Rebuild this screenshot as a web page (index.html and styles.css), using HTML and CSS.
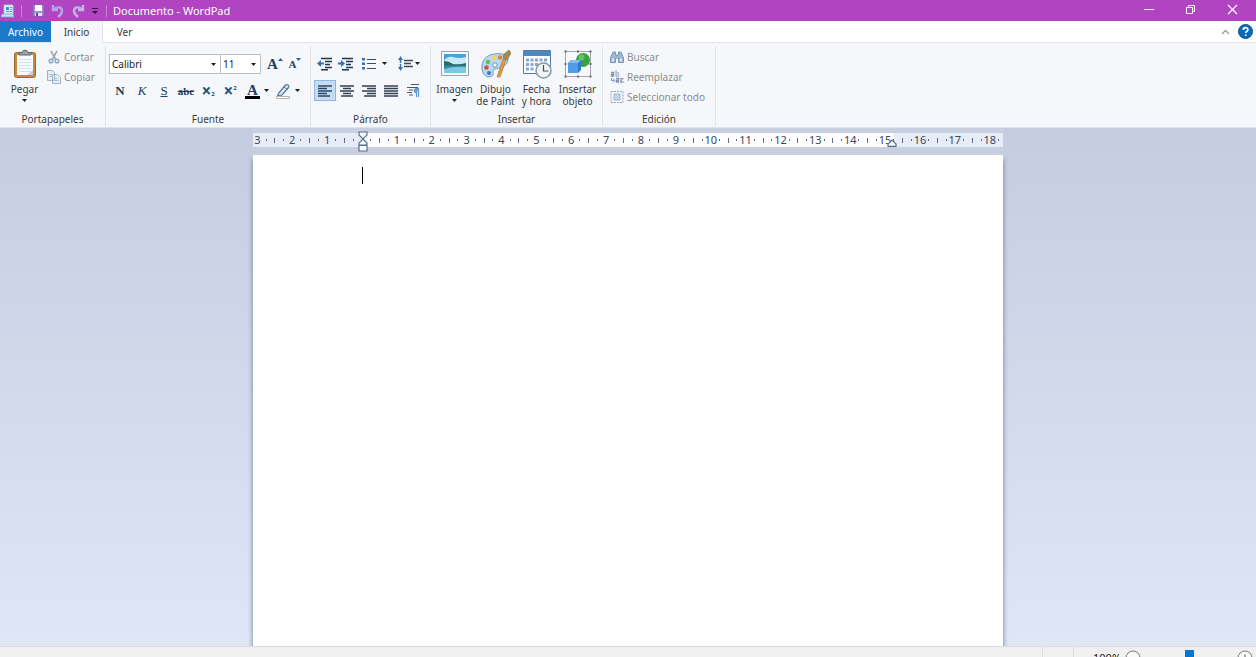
FILE: index.html
```html
<!DOCTYPE html>
<html lang="es">
<head>
<meta charset="utf-8">
<title>Documento - WordPad</title>
<link rel="stylesheet" href="styles.css">
</head>
<body>
<header class="titlebar">
  <svg class="app-icon" width="14" height="14" viewBox="0 0 14 14"><path d="M3 1h9v9H3z" fill="#e8f4ff" stroke="#9cc4e4"/><path d="M5 3h3v3H5z" fill="#3f8fc9"/><path d="M9 3.5h2M9 5.5h2M5 7.5h6" stroke="#5a93c0"/><path d="M1 10h11l1 3H0z" fill="#c4e2f5" stroke="#7fa9d0" stroke-width=".7"/></svg>
  <span class="bar"></span>
  <button class="quick" aria-label="Guardar"><svg width="13" height="13" viewBox="0 0 13 13"><path d="M1 1h11v11H1z" fill="#a48bd4" stroke="#7d62b4"/><path d="M3 1h7v6H3z" fill="#fff"/><path d="M3 9h7v3H3z" fill="#e6e0f4"/><path d="M4 9h2v3H4z" fill="#584a86"/></svg></button>
  <button class="quick" aria-label="Deshacer"><svg width="14" height="14" viewBox="0 0 14 14"><path d="M2 1v5h5M2.500 5.500C6 2 11 3 11 7c0 3-2 4.500-4 6" fill="none" stroke="#b3a6e8" stroke-width="2.400"/></svg></button>
  <button class="quick" aria-label="Rehacer"><svg width="14" height="14" viewBox="0 0 14 14"><path d="M12 1v5H7M11.500 5.500C8 2 3 3 3 7c0 3 2 4.500 4 6" fill="none" stroke="#c4b5e6" stroke-width="2.400"/></svg></button>
  <button class="quick more" aria-label="Personalizar"><svg width="8" height="8" viewBox="0 0 8 8"><path d="M1 1.500h6" stroke="#2b1333"/><path d="M1 4h6L4 7z" fill="#2b1333"/></svg></button>
  <span class="bar"></span>
  <h1 class="title">Documento - WordPad</h1>
  <button class="win" aria-label="Minimizar"><svg width="11" height="11" viewBox="0 0 11 11"><path d="M1 5.500h10" stroke="#fff"/></svg></button>
  <button class="win" aria-label="Restaurar"><svg width="11" height="11" viewBox="0 0 11 11"><path d="M1.500 3.500h6v6h-6zM3.500 3V1.500h6v6H8" fill="none" stroke="#fff"/></svg></button>
  <button class="win" aria-label="Cerrar"><svg width="11" height="11" viewBox="0 0 11 11"><path d="M1 1l9 9M10 1l-9 9" stroke="#fff" stroke-width="1.200"/></svg></button>
</header>

<nav class="tabs">
  <button class="tab file">Archivo</button>
  <button class="tab active">Inicio</button>
  <button class="tab">Ver</button>
  <span class="grow"></span>
  <button class="plain" aria-label="Minimizar la cinta"><svg width="9" height="6" viewBox="0 0 9 6"><path d="M1 5l3.500-3.500L8 5" fill="none" stroke="#9a9a9a" stroke-width="1.300"/></svg></button>
  <button class="plain" aria-label="Ayuda"><svg width="15" height="15" viewBox="0 0 15 15"><circle cx="7.500" cy="7.500" r="7" fill="#0c6bb8" stroke="#0a5292"/><path d="M5.300 6c0-3 4.600-3 4.600-.3 0 1.600-2.200 1.600-2.200 3.300M7.700 10.500v1.500" fill="none" stroke="#fff" stroke-width="1.700"/></svg></button>
</nav>

<main class="ribbon">
  <section class="group clipboard">
    <div class="content row">
      <button class="big paste">
        <svg width="24" height="30" viewBox="0 0 24 30"><rect x="1.500" y="3.500" width="21" height="25" rx="2" fill="#c98a3c" stroke="#9c6a2c"/><path d="M4 6h16v20H4z" fill="#f7fbff"/><path d="M6 10.500h12M6 13.500h12M6 16.500h12M6 19.500h12M6 22.500h12" stroke="#cfe0ee"/><path d="M14 26l6-5v5z" fill="#c3d2de"/><path d="M6 6V3.500h3c0-3 6-3 6 0h3V6z" fill="#9aa2a8" stroke="#5c646c"/></svg>
        <span>Pegar</span>
        <svg class="arrow" width="5" height="3" viewBox="0 0 5 3"><path d="M0 0h5L2.500 3z"/></svg>
      </button>
      <div class="stack">
        <button class="small" disabled><svg width="14" height="14" viewBox="0 0 14 14"><path d="M4 1l5 9M10 1L5 10" stroke="#9fabb9" stroke-width="1.700"/><circle cx="4" cy="11" r="1.800" fill="none" stroke="#8fa6c4" stroke-width="1.500"/><circle cx="10" cy="11" r="1.800" fill="none" stroke="#8fa6c4" stroke-width="1.500"/></svg><span>Cortar</span></button>
        <button class="small" disabled><svg width="14" height="14" viewBox="0 0 14 14"><path d="M.5.500h5l2 2v8h-7zM5.500 4.500h5l3 3v6h-8z" fill="#e6eef6" stroke="#9fb2c6"/><path d="M2 4.500h3M2 6.500h3M7 8.500h4M7 10.500h5" stroke="#a9c2da"/></svg><span>Copiar</span></button>
      </div>
    </div>
    <h2 class="caption">Portapapeles</h2>
  </section>

  <section class="group font">
    <div class="content lines">
      <div class="row">
        <div class="combo family"><select aria-label="Familia de fuente"><option>Calibri</option></select><svg class="arrow" width="5" height="3" viewBox="0 0 5 3"><path d="M0 0h5L2.500 3z"/></svg></div>
        <div class="combo size"><select aria-label="Tamaño de fuente"><option>11</option></select><svg class="arrow" width="5" height="3" viewBox="0 0 5 3"><path d="M0 0h5L2.500 3z"/></svg></div>
        <button class="tool grow-font" aria-label="Agrandar fuente"><span class="letter">A</span><svg width="5" height="12" viewBox="0 0 5 12"><path d="M0 3h5L2.500 0z" fill="#2d5f97"/></svg></button>
        <button class="tool shrink-font" aria-label="Reducir fuente"><span class="letter">A</span><svg width="5" height="12" viewBox="0 0 5 12"><path d="M0 0h5L2.500 3z" fill="#2d5f97"/></svg></button>
      </div>
      <div class="row">
        <button class="tool letter"><b>N</b></button>
        <button class="tool letter"><i>K</i></button>
        <button class="tool letter"><u>S</u></button>
        <button class="tool letter strike"><s>abc</s></button>
        <button class="tool script" aria-label="Subíndice">×<sub>2</sub></button>
        <button class="tool script" aria-label="Superíndice">×<sup>2</sup></button>
        <button class="tool split" aria-label="Color del texto"><span class="letter colored">A</span><svg class="arrow" width="5" height="3" viewBox="0 0 5 3"><path d="M0 0h5L2.500 3z"/></svg></button>
        <button class="tool split highlight" aria-label="Color de resaltado"><svg width="16" height="16" viewBox="0 0 16 16"><path d="M3.500 10.500L10 2.500c2-2 5 0 3.500 2L7 12l-4.500 1z" fill="#dce8f4" stroke="#56789b" stroke-width="1.200"/><path d="M9 4l3.500 2.500" stroke="#56789b"/><path d="M1.500 13.500h13v2h-13z" fill="#fff" stroke="#b4b7a8"/></svg><svg class="arrow" width="5" height="3" viewBox="0 0 5 3"><path d="M0 0h5L2.500 3z"/></svg></button>
      </div>
    </div>
    <h2 class="caption">Fuente</h2>
  </section>

  <section class="group paragraph">
    <div class="content lines">
      <div class="row">
        <button class="tool indent" aria-label="Reducir sangría"><svg width="16" height="14" viewBox="0 0 16 14"><path d="M4 1.500h11M8 4.500h7M8 7.500h5M8 10.500h7M4 12.800h7" stroke="#1f3850" stroke-width="1.500"/><path d="M0 6.500l4-3.500v2.500h3v2H4V10z" fill="#2f74b5"/></svg></button>
        <button class="tool indent" aria-label="Aumentar sangría"><svg width="16" height="14" viewBox="0 0 16 14"><path d="M4 1.500h11M8 4.500h7M8 7.500h5M8 10.500h7M4 12.800h7" stroke="#1f3850" stroke-width="1.500"/><path d="M7 6.500L3 3v2.500H0v2h3V10z" fill="#2f74b5"/></svg></button>
        <button class="tool split list" aria-label="Iniciar una lista"><svg width="14" height="13" viewBox="0 0 14 13"><path d="M0 1h3v2.500H0zM0 5.500h3V8H0zM0 10h3v2.500H0z" fill="#2f74b5"/><path d="M5 2.500h9M5 6.500h9M5 11.500h9" stroke="#3d4d5c"/></svg><svg class="arrow" width="5" height="3" viewBox="0 0 5 3"><path d="M0 0h5L2.500 3z"/></svg></button>
        <button class="tool split spacing" aria-label="Espaciado de línea"><svg width="15" height="15" viewBox="0 0 15 15"><path d="M2.500 3v9" stroke="#2f74b5" stroke-width="1.500" stroke-dasharray="4 1"/><path d="M0 4l2.500-4L5 4zM0 11l2.500 4L5 11z" fill="#2f74b5"/><path d="M6 4.500h9M6 7.500h7M6 10.500h9" stroke="#3d4d5c" stroke-width="1.300"/></svg><svg class="arrow" width="5" height="3" viewBox="0 0 5 3"><path d="M0 0h5L2.500 3z"/></svg></button>
      </div>
      <div class="row">
        <button class="tool pressed" aria-label="Alinear a la izquierda"><svg width="14" height="12" viewBox="0 0 14 12"><path d="M0 1h14M0 3.500h9M0 6h14M0 8.500h9M0 11h12" stroke="#2b4566" stroke-width="1.500"/></svg></button>
        <button class="tool" aria-label="Centrar"><svg width="14" height="12" viewBox="0 0 14 12"><path d="M0 1h14M3 3.500h8M0 6h14M3 8.500h8M1 11h12" stroke="#333f4d" stroke-width="1.500"/></svg></button>
        <button class="tool" aria-label="Alinear a la derecha"><svg width="14" height="12" viewBox="0 0 14 12"><path d="M0 1h14M5 3.500h9M0 6h14M5 8.500h9M2 11h12" stroke="#333f4d" stroke-width="1.500"/></svg></button>
        <button class="tool" aria-label="Justificar"><svg width="14" height="12" viewBox="0 0 14 12"><path d="M0 1h14M0 3.500h14M0 6h14M0 8.500h14M0 11h14" stroke="#333f4d" stroke-width="1.500"/></svg></button>
        <button class="tool" aria-label="Párrafo"><svg width="13" height="13" viewBox="0 0 13 13"><path d="M4 .5h8M0 3.500h11M2 6h4M0 8.500h5M2 11h4" stroke="#4c5967"/><path d="M12 4.500H9.500c-3 0-3 4 0 4M9.500 5v8M11.500 5v8" fill="#79aedb" stroke="#5e97cb" stroke-width="1.200"/></svg></button>
      </div>
    </div>
    <h2 class="caption">Párrafo</h2>
  </section>

  <section class="group insert">
    <div class="content row">
      <button class="big">
        <svg width="28" height="30" viewBox="0 0 28 30"><path d="M.5 2.500h27v24H.5z" fill="#f6fbfd" stroke="#8fa6ae"/><path d="M3 5h22v19H3z" fill="#4f9fe0"/><path d="M3 12q3-5 9-4 6 2 13 0v8H3z" fill="#c8e9f7"/><path d="M3 12q5 0 9 3 6 1 13-1v3H3z" fill="#2f6b5c"/><path d="M3 16.500h22V20H3z" fill="#2f86b4"/><path d="M3 20q10-3 22-2v6H3z" fill="#7cc8dc"/></svg>
        <span>Imagen</span>
        <svg class="arrow" width="5" height="3" viewBox="0 0 5 3"><path d="M0 0h5L2.500 3z"/></svg>
      </button>
      <button class="big">
        <svg width="30" height="30" viewBox="0 0 30 30"><path d="M13 5C5 6 0 12 1 20c1 8 7 9 10 7 3-2-1-5 3-7 4-1 12-2 13-9 0-6-7-7-14-6z" fill="#b4dbf2" stroke="#6c9cc4"/><circle cx="13" cy="9" r="2.300" fill="#f5d64e"/><circle cx="7" cy="13" r="2.200" fill="#69b95b"/><circle cx="5.500" cy="18.500" r="2.200" fill="#d94b3b"/><circle cx="14" cy="16" r="2.200" fill="#f9fdff" stroke="#6796b8"/><circle cx="19" cy="8.500" r="2.200" fill="#e58138"/><circle cx="8" cy="24" r="2" fill="#4376c2"/><path d="M16 28l6-18 3 1-6 17z" fill="#e09a4b" stroke="#b87434" stroke-width=".7"/><path d="M22 9l1-4 5-4 2 3-4 7z" fill="#a38a54" stroke="#8a784c" stroke-width=".7"/></svg>
        <span>Dibujo<br>de Paint</span>
      </button>
      <button class="big">
        <svg width="30" height="30" viewBox="0 0 30 30"><path d="M1.500 1.500h27v23h-27z" fill="#fff" stroke="#527ba5"/><path d="M1 2h28v5H1z" fill="#4c87bd"/><path d="M4 9.500h3v3H4zM8.500 9.500h3v3h-3zM13 9.500h3v3h-3zM17.500 9.500h3v3h-3zM22 9.500h3v3h-3zM4 14h3v3H4zM8.500 14h3v3h-3zM13 14h3v3h-3zM4 18.500h3v3H4zM8.500 18.500h3v3h-3z" fill="#80a9d4"/><circle cx="21.500" cy="21.500" r="7.500" fill="#f1f4f6" stroke="#8b97a1" stroke-width="1.500"/><path d="M21.500 16v6h5" fill="none" stroke="#44515c" stroke-width="1.200"/></svg>
        <span>Fecha<br>y hora</span>
      </button>
      <button class="big">
        <svg width="28" height="30" viewBox="0 0 28 30"><path d="M1.500 2.500h25v25h-25z" fill="#f7f8fa" stroke="#a3a5aa"/><path d="M.5 1.500h2v2h-2zM13 1.500h2v2h-2zM25.500 1.500h2v2h-2zM.5 14h2v2h-2zM25.500 14h2v2h-2zM.5 26.500h2v2h-2zM13 26.500h2v2h-2zM25.500 26.500h2v2h-2z" fill="#66686e"/><circle cx="19" cy="11" r="7" fill="#38a141"/><circle cx="17.500" cy="8.500" r="3" fill="#69c467"/><path d="M4 14l3-3h10v10l-3 3H4z" fill="#2e78ce"/><path d="M4 14l3-3h10l-3 3z" fill="#83bcf1"/><path d="M4 14h10v10H4z" fill="#4f9ce8"/></svg>
        <span>Insertar<br>objeto</span>
      </button>
    </div>
    <h2 class="caption">Insertar</h2>
  </section>

  <section class="group editing">
    <div class="content stack">
      <button class="small" disabled><svg width="14" height="14" viewBox="0 0 14 14"><path d="M3 2h2.500v3h3V2H11l2.500 6v4.500h-5V8h-3v4.500h-5V8z" fill="#9fb8d4" stroke="#7896b8"/><path d="M2 8.500h2v3H2zM10 8.500h2v3h-2z" fill="#dde8f3"/></svg><span>Buscar</span></button>
      <button class="small" disabled><svg width="14" height="14" viewBox="0 0 14 14"><g fill="none" stroke="#8494a8" stroke-width="1.300"><path d="M1 2.500h2.500V6H1.500V4.300h2"/><path d="M6 0v6h2.500V3H6" stroke="#a7b9d0"/><path d="M6 8.500h2.500V12H6.500v-1.700h2"/><path d="M13.500 8.700H11V12h2.500"/></g><path d="M1.500 8v2.500H4M3 8.500l2 2-2 2" fill="none" stroke="#6f9ccb"/></svg><span>Reemplazar</span></button>
      <button class="small" disabled><svg width="14" height="14" viewBox="0 0 14 14"><path d="M1 1.500h12v11H1z" fill="none" stroke="#8da5c0" stroke-dasharray="2 1"/><path d="M4 4h6v6H4z" fill="#c3d5e8" stroke="#9db5cf"/></svg><span>Seleccionar todo</span></button>
    </div>
    <h2 class="caption">Edición</h2>
  </section>
</main>

<div class="workspace">
  <div class="ruler">
    <div class="scale" id="scale"></div>
    <svg class="marker first" width="10" height="22" viewBox="0 0 10 22"><path d="M1 1h8v3L5 8 1 4zM5 8l4 4v2H1v-2zM1 14.500h8V20H1z" fill="#f6f9fd" stroke="#5b7190" stroke-width="1.200"/></svg>
    <svg class="marker last" width="10" height="8" viewBox="0 0 10 8"><path d="M5 1l4 4v2.300H1V5z" fill="#f6f9fd" stroke="#5b7190" stroke-width="1.200"/></svg>
  </div>
  <div class="page" contenteditable="true" role="textbox" aria-label="Documento"><span class="caret"></span></div>
</div>

<footer class="status">
  <span class="cell"></span>
  <span class="cell zoom-gap"></span>
  <span class="zoom">100%</span>
  <button class="plain" aria-label="Alejar"><svg width="16" height="16" viewBox="0 0 16 16"><circle cx="8" cy="8" r="7" fill="#fafafa" stroke="#777"/><path d="M4.500 8h7" stroke="#555"/></svg></button>
  <input class="slider" type="range" min="0" max="100" value="50" aria-label="Zoom">
  <button class="plain" aria-label="Acercar"><svg width="16" height="16" viewBox="0 0 16 16"><circle cx="8" cy="8" r="7" fill="#fafafa" stroke="#777"/><path d="M4.500 8h7M8 4.500v7" stroke="#555"/></svg></button>
</footer>
<script src="ruler.js"></script>
</body>
</html>
```
FILE: styles.css
```css
* { box-sizing: border-box; }
html { height: 100%; overflow: hidden; }
body {
  margin: 0;
  height: calc(100vh + 12px);
  display: flex;
  flex-direction: column;
  font: 10px/12px "Noto Sans", sans-serif;
  color: #3b3b3b;
  background: #f5f7fa;
}
button { margin: 0; padding: 0; border: 0; background: none; font: inherit; color: inherit; }
h1, h2 { margin: 0; font: inherit; }
svg { display: block; flex: none; }
.arrow { fill: #1d1d1d; }
.row { display: flex; }
.stack { display: flex; flex-direction: column; align-items: flex-start; }
.grow { flex: 1; }
.plain { display: flex; align-items: center; }

.titlebar { flex: none; height: 21px; display: flex; align-items: center; background: #b144c0; color: #fff; font-size: 11px; }
.app-icon { margin: 0 6px 0 1px; }
.bar { width: 1px; height: 12px; background: #c983d3; }
.quick { width: 20px; display: flex; justify-content: center; }
.titlebar .bar + .quick { margin-left: 6px; }
.more { width: 14px; margin-right: 4px; }
.title { flex: 1; padding-left: 6px; }
.win { width: 42px; height: 21px; padding-bottom: 2px; display: flex; align-items: center; justify-content: center; }
.win:last-child { margin-right: 3px; }

.tabs { flex: none; height: 22px; display: flex; background: #fff; border-bottom: 1px solid #e2e4e7; }
.tab { width: 43px; height: 22px; }
.tab.file { width: 51px; height: 21px; background: #1979ca; color: #fff; }
.tab.active { width: 52px; background: #f5f7fa; border-right: 1px solid #e2e4e7; }
.tabs .plain { margin: 0 3px 0 5px; }
.tabs .plain:last-child { margin-right: 3px; }

.ribbon { flex: none; display: flex; padding: 3px 0 1px; background: #f5f7fa; border-bottom: 1px solid #dde3ec; }
.group { display: flex; flex-direction: column; border-right: 1px solid #e0e4ea; }
.content { height: 64px; padding-left: 3px; }
.clipboard .content { padding-left: 0; }
.editing .content { padding-left: 7px; }
.caption { height: 16px; line-height: 18px; text-align: center; }
.clipboard { width: 106px; }
.font { width: 205px; }
.paragraph { width: 120px; }
.insert { width: 172px; }
.editing { width: 113px; }

.big { width: 41px; padding-top: 3px; display: flex; flex-direction: column; align-items: center; justify-content: flex-start; }
.big span { margin-top: 4px; white-space: nowrap; }
.big .arrow { margin-top: 4px; }
.paste { width: 47px; padding-left: 2px; }
.small { height: 20px; padding: 0; display: flex; align-items: center; gap: 3px; white-space: nowrap; color: #8c8c8c; }
.content.stack, .clipboard .stack { padding-top: 1px; }

.lines { display: flex; flex-direction: column; gap: 4px; padding-top: 6px; }
.lines .row { height: 23px; align-items: center; }
.combo { position: relative; height: 20px; border: 1px solid #b9bfc6; background: #fff; }
.combo select { width: 100%; height: 100%; padding: 0 2px; border: 0; appearance: none; background: none; font: inherit; color: #222; }
.combo .arrow { position: absolute; right: 4px; top: 8px; pointer-events: none; }
.family { width: 112px; }
.size { width: 40px; border-left: 0; }
.tool { width: 22px; height: 21px; display: flex; align-items: center; justify-content: center; color: #24405c; }
.letter { font: bold 13px/14px "Liberation Serif", serif; color: #24405c; }
.letter i, .letter u { font-weight: normal; }
.strike { font-size: 11px; }
.grow-font { margin-left: 3px; }
.grow-font .letter { font-size: 15px; }
.shrink-font { width: 18px; }
.shrink-font .letter { font-size: 11px; }
.script { font: bold 17px/14px "Noto Sans", sans-serif; color: #24527f; }
.script sub, .script sup { font-size: 6px; line-height: 6px; }
.script sub { padding-top: 6px; }
.script sup { padding-bottom: 6px; }
.split { width: 32px; gap: 4px; }
.colored { width: 15px; height: 16px; text-align: center; font-size: 15px; border-bottom: 3px solid #000; line-height: 14px; }
.highlight { width: 28px; }
.indent { width: 21px; }
.list { width: 37px; gap: 6px; }
.spacing { width: 32px; gap: 2px; }
.pressed { background: #c4ddf5; border: 1px solid #8db5df; }

.workspace { flex: 1; min-height: 0; display: flex; flex-direction: column; align-items: center; background: linear-gradient(#c5cce0, #dfe6f6); }
.ruler { position: relative; flex: none; width: 750px; max-width: 100%; height: 27px; padding-top: 5px; background: #c7cfe1; }
.scale { display: flex; width: 100%; height: 14px; background: linear-gradient(90deg, #e8ecf6 14.6%, #fff 14.6% 85.3%, #e8ecf6 85.3%); color: #3b485c; font-size: 11px; }
.mark { flex: 1 1 0; min-width: 0; display: flex; align-items: center; justify-content: center; line-height: 14px; }
.mark.dot::before { content: ""; width: 1px; height: 2px; background: #5d6a7d; }
.mark.half::before { content: ""; width: 1px; height: 5px; background: #5d6a7d; }
.marker { position: absolute; }
.first { left: calc(14.6% - 5px); top: 3px; }
.last { left: calc(85.3% - 6px); top: 11px; }
.page { flex: 1; width: 750px; max-width: 100%; padding: 12px 109px; background: #fff; box-shadow: 0 5px 5px #6d7a94; outline: 0; clip-path: inset(0 -6px); }
.caret { display: block; width: 1px; height: 17px; background: #000; }

.status { flex: none; height: 23px; padding-right: 3px; display: flex; align-items: center; justify-content: flex-end; background: #f0f0f0; border-top: 1px solid #d9dbe0; color: #222; }
.cell { width: 31px; height: 100%; border-left: 1px solid #dcdcdc; }
.zoom-gap { width: 20px; }
.zoom { width: 32px; font-size: 11px; }
.slider { flex: none; width: 80px; height: 18px; margin: 0 8px; appearance: none; background: linear-gradient(#b8b8b8, #b8b8b8) center / 100% 1px no-repeat; }
.slider::-webkit-slider-thumb { appearance: none; width: 9px; height: 16px; background: #0078d7; }
```
FILE: ruler.js
```js
// Four marks per centimetre, from 3 cm left of the margin to 18 cm right of it.
const scale = document.getElementById('scale');
for (let quarter = -12; quarter <= 73; quarter++) {
  const mark = document.createElement('span');
  mark.className = 'mark';
  if (quarter % 4 === 0) {
    if (quarter !== 0) mark.textContent = Math.abs(quarter / 4);
  } else {
    mark.classList.add(quarter % 2 === 0 ? 'half' : 'dot');
  }
  scale.append(mark);
}
```
